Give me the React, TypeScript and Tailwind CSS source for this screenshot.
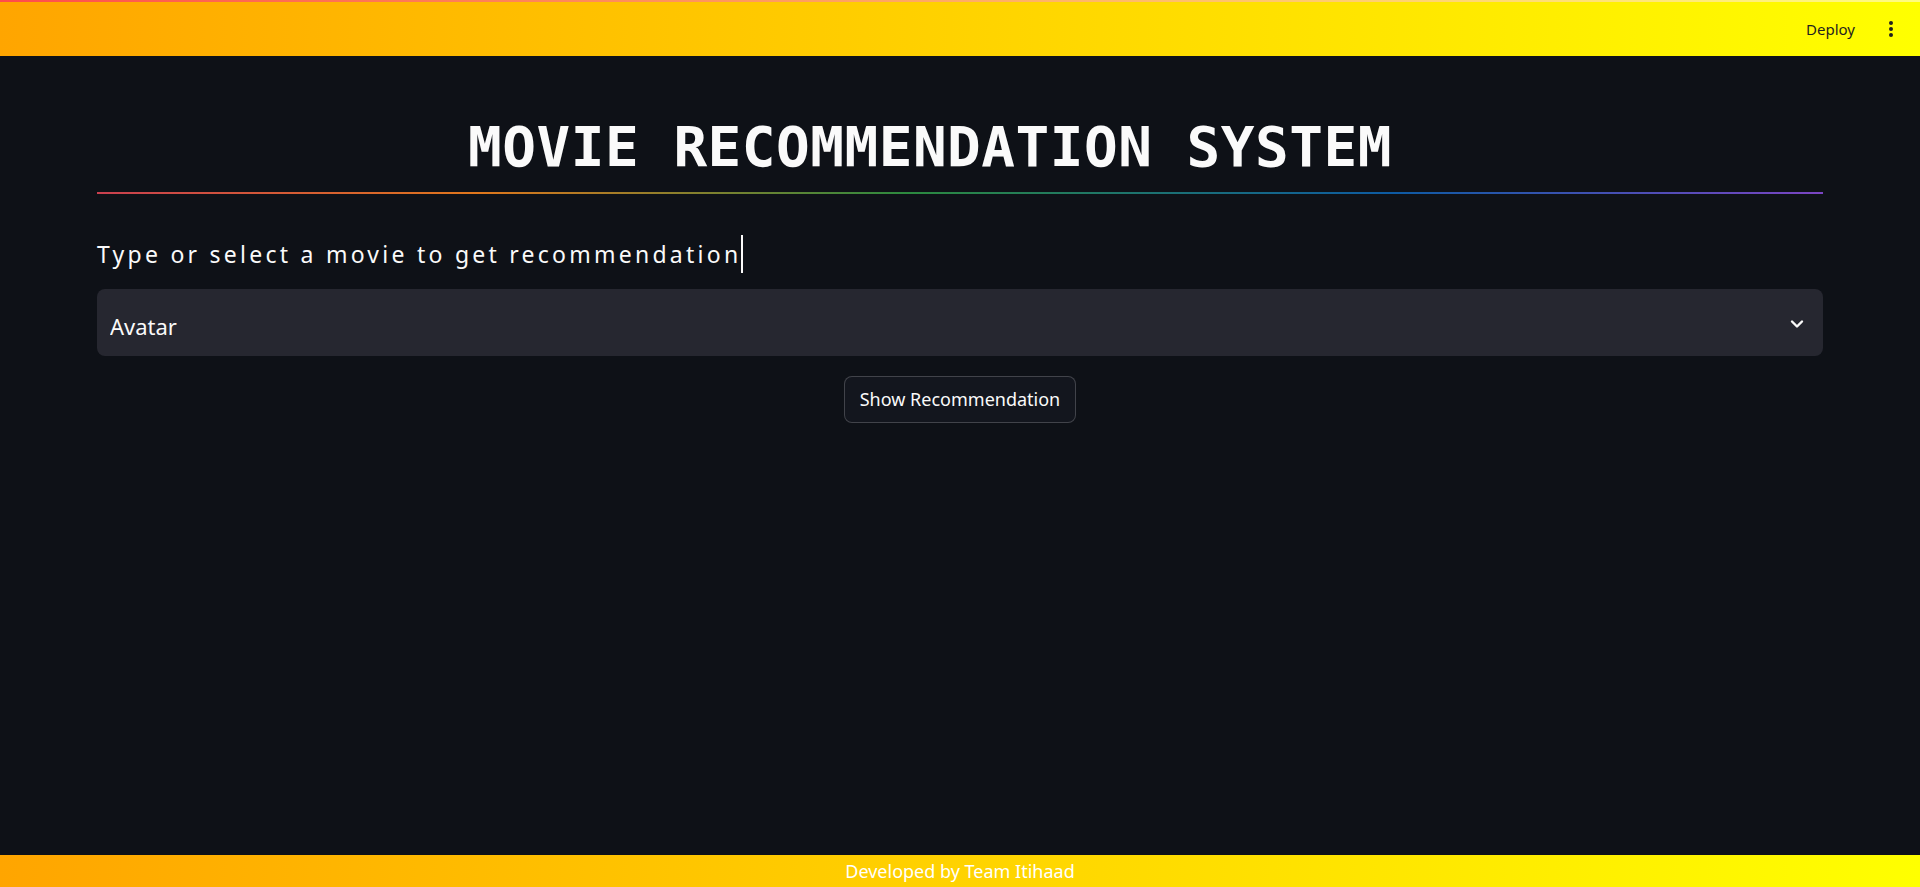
import React, { useState } from 'react';

const movies = ['Avatar', 'Titanic', 'Inception', 'The Dark Knight', 'Interstellar'];

const ChevronDown: React.FC = () => (
  <svg width="14" height="10" viewBox="0 0 14 10" fill="none">
    <path d="M2 2.5 L7 7.5 L12 2.5" stroke="#fafafa" strokeWidth="2.4" strokeLinecap="round" strokeLinejoin="round" />
  </svg>
);

const App: React.FC = () => {
  const [selected, setSelected] = useState(movies[0]);

  return (
    <div className="h-[887px] w-full bg-[#0e1117] flex flex-col overflow-hidden font-['Noto_Sans',sans-serif]">
      {/* Header */}
      <header className="h-14 flex flex-col bg-gradient-to-r from-[#ffa500] to-[#ffff00]">
        <div className="h-[2px] bg-gradient-to-r from-[#ff4b4b] to-[#fffd80]" />
        <div className="flex-1 flex items-center justify-end pr-[27px] gap-[34px]">
          <span className="text-[15px] text-[#1f1f1f]">Deploy</span>
          <div className="flex flex-col gap-[2px]">
            <span className="w-[4px] h-[4px] rounded-full bg-[#1f1f1f]" />
            <span className="w-[4px] h-[4px] rounded-full bg-[#1f1f1f]" />
            <span className="w-[4px] h-[4px] rounded-full bg-[#1f1f1f]" />
          </div>
        </div>
      </header>

      {/* Main */}
      <main className="flex-1 px-[97px]">
        <h1 className="mt-[57px] text-center pr-[60px] font-['DejaVu_Sans_Mono',monospace] font-bold text-[56px] leading-[67px] text-[#fafafa] tracking-[0.5px]">
          MOVIE RECOMMENDATION SYSTEM
        </h1>
        <div className="mt-[12px] h-[2px] bg-[linear-gradient(to_right,#c9404f,#e0771c_22%,#2c8a3f_47%,#0d5ba3_75%,#7b45c3)]" />

        <div className="mt-[41px] h-[38px]">
          <span className="inline-block h-[38px] text-[23px] leading-[38px] tracking-[3.25px] text-[#fafafa] border-r-2 border-[#fafafa]">
            Type or select a movie to get recommendation
          </span>
        </div>

        <div className="mt-[16px] relative">
          <select
            value={selected}
            onChange={(e) => setSelected(e.target.value)}
            className="appearance-none w-full h-[67px] rounded-lg bg-[#262730] text-[#fafafa] text-[22px] pl-[13px] pt-[8px] outline-none"
          >
            {movies.map((m) => (
              <option key={m} value={m}>
                {m}
              </option>
            ))}
          </select>
          <div className="absolute right-[19px] top-[30px] pointer-events-none">
            <ChevronDown />
          </div>
        </div>

        <div className="mt-[20px] flex justify-center">
          <button className="w-[232px] h-[47px] rounded-lg border border-[rgba(250,250,250,0.2)] bg-[#13161e] text-[#fafafa] text-[18px]">
            Show Recommendation
          </button>
        </div>
      </main>

      {/* Footer */}
      <footer className="h-8 flex items-center justify-center bg-gradient-to-r from-[#ffa500] to-[#ffff00]">
        <span className="text-[18px] text-white">Developed by Team Itihaad</span>
      </footer>
    </div>
  );
};

export default App;
